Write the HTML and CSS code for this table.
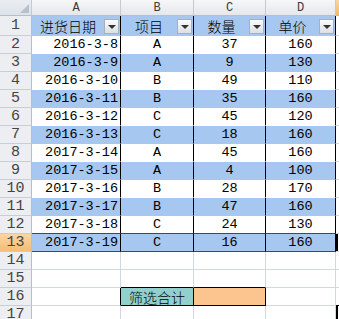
FILE: index.html
```html
<!DOCTYPE html>
<html>
<head>
<meta charset="utf-8">
<link rel="stylesheet" href="styles.css">
</head>
<body>
<div class="sheet">
  <div class="ch corner"><span class="tri"></span></div>
  <div class="ch">A</div><div class="ch">B</div><div class="ch">C</div><div class="ch">D</div><div class="ch sel"></div>

  <div class="rh">1</div>
  <div class="c t blue hd"><span class="hl">进货日期</span><span class="dd"><i></i></span></div>
  <div class="c t blue hd"><span class="hl">项目</span><span class="dd"><i></i></span></div>
  <div class="c t blue hd"><span class="hl">数量</span><span class="dd"><i></i></span></div>
  <div class="c t blue hd"><span class="hl">单价</span><span class="dd"><i></i></span></div>
  <div class="c e"></div>

  <div class="rh">2</div><div class="c t r">2016-3-8</div><div class="c t m">A</div><div class="c t m">37</div><div class="c t m">160</div><div class="c e"></div>
  <div class="rh">3</div><div class="c t blue r">2016-3-9</div><div class="c t blue m">A</div><div class="c t blue m">9</div><div class="c t blue m">130</div><div class="c e"></div>
  <div class="rh">4</div><div class="c t r">2016-3-10</div><div class="c t m">B</div><div class="c t m">49</div><div class="c t m">110</div><div class="c e"></div>
  <div class="rh">5</div><div class="c t blue r">2016-3-11</div><div class="c t blue m">B</div><div class="c t blue m">35</div><div class="c t blue m">160</div><div class="c e"></div>
  <div class="rh">6</div><div class="c t r">2016-3-12</div><div class="c t m">C</div><div class="c t m">45</div><div class="c t m">120</div><div class="c e"></div>
  <div class="rh">7</div><div class="c t blue r">2016-3-13</div><div class="c t blue m">C</div><div class="c t blue m">18</div><div class="c t blue m">160</div><div class="c e"></div>
  <div class="rh">8</div><div class="c t r">2017-3-14</div><div class="c t m">A</div><div class="c t m">45</div><div class="c t m">160</div><div class="c e"></div>
  <div class="rh">9</div><div class="c t blue r">2017-3-15</div><div class="c t blue m">A</div><div class="c t blue m">4</div><div class="c t blue m">100</div><div class="c e"></div>
  <div class="rh">10</div><div class="c t r">2017-3-16</div><div class="c t m">B</div><div class="c t m">28</div><div class="c t m">170</div><div class="c e"></div>
  <div class="rh">11</div><div class="c t blue r">2017-3-17</div><div class="c t blue m">B</div><div class="c t blue m">47</div><div class="c t blue m">160</div><div class="c e"></div>
  <div class="rh">12</div><div class="c t r12 r">2017-3-18</div><div class="c t r12 m">C</div><div class="c t r12 m">24</div><div class="c t r12 m">130</div><div class="c e"></div>
  <div class="rh sel">13</div><div class="c t blue r13 r">2017-3-19</div><div class="c t blue r13 m">C</div><div class="c t blue r13 m">16</div><div class="c t blue r13 m">160</div><div class="c e active"></div>

  <div class="rh">14</div><div class="c"></div><div class="c"></div><div class="c"></div><div class="c"></div><div class="c e"></div>
  <div class="rh">15</div><div class="c"></div><div class="c bb"></div><div class="c bb"></div><div class="c"></div><div class="c e"></div>
  <div class="rh">16</div><div class="c br"></div><div class="c teal box m">筛选合计</div><div class="c orange box"></div><div class="c"></div><div class="c e"></div>
  <div class="rh">17</div><div class="c"></div><div class="c"></div><div class="c"></div><div class="c"></div><div class="c e corner-mark"></div>
</div>
</body>
</html>
```

FILE: styles.css
```css
html, body {
  margin: 0;
  padding: 0;
  background: #fff;
  overflow: hidden;
}
.sheet {
  display: grid;
  grid-template-columns: 32px 89px 73px 72px 70px 3px;
  grid-template-rows: 16px 20px repeat(16, 18px);
  width: 339px;
  font-family: "Liberation Mono", monospace;
  font-size: 13.5px;
  color: #000;
}
.sheet > div {
  box-sizing: border-box;
  border-right: 1px solid #d0d7e5;
  border-bottom: 1px solid #d0d7e5;
  display: flex;
  align-items: center;
  overflow: hidden;
  white-space: nowrap;
  position: relative;
}
.ch {
  background: linear-gradient(#f6f7f9, #e4e7eb);
  border-right-color: #c5c9d0 !important;
  border-bottom-color: #b9bec6 !important;
  justify-content: center;
  color: #3b3b3b;
  font-size: 12px;
  padding-top: 1px;
}
.ch.corner {
  background: linear-gradient(#e9edf2, #dde3ea);
}
.tri {
  position: absolute;
  right: 2px;
  bottom: 2px;
  width: 0;
  height: 0;
  border-left: 9px solid transparent;
  border-bottom: 9px solid #b7c1cd;
}
.ch.sel {
  background: linear-gradient(#f9d7a4, #f2b967);
  border-right: none !important;
}
.rh {
  background: #eceef1;
  border-right-color: #b9bec6 !important;
  border-bottom-color: #c9ced6 !important;
  justify-content: center;
  color: #444;
  font-size: 15px;
}
.rh.sel {
  background: linear-gradient(#fad6a5, #f4bd74);
}
.c.e {
  border-right: none;
}
.t {
  border-right-color: #000 !important;
  border-bottom-color: transparent !important;
}
.blue {
  background: #a6c7ef;
}
.r {
  justify-content: flex-end;
  padding-right: 2px;
}
.m {
  justify-content: center;
}
.hd {
  justify-content: space-between;
  font-family: "Noto Sans CJK SC", sans-serif;
  font-weight: 300;
  font-size: 14px;
  padding-right: 1px;
}
.hl {
  flex: 1;
  text-align: center;
  line-height: 16px;
}
.dd {
  width: 15px;
  height: 15px;
  box-sizing: border-box;
  border: 1px solid #a9b0ba;
  background: linear-gradient(#fbfbfb, #dcdfe3);
  display: flex;
  align-items: center;
  justify-content: center;
  align-self: flex-end;
  margin-bottom: 1px;
}
.dd i {
  width: 0;
  height: 0;
  border-left: 4px solid transparent;
  border-right: 4px solid transparent;
  border-top: 4px solid #333;
}
.r12 {
  border-bottom-color: #3c4a5c !important;
}
.r13 {
  border-bottom-color: #3c4a5c !important;
}
.active {
  background: linear-gradient(90deg, #000 0 2px, #fff 2px);
}
.bb {
  border-bottom-color: #000 !important;
}
.br {
  border-right-color: #000 !important;
}
.box {
  border-right-color: #000 !important;
  border-bottom-color: #000 !important;
}
.teal {
  background: #93cfcb;
  font-family: "Noto Sans CJK SC", sans-serif;
  font-weight: 300;
  font-size: 14px;
}
.orange {
  background: #fcc48e;
}
.corner-mark {
  border-top: 1px solid #000;
  background: linear-gradient(90deg, #000 0 2px, #fff 2px);
  margin-top: -1px;
}
```
